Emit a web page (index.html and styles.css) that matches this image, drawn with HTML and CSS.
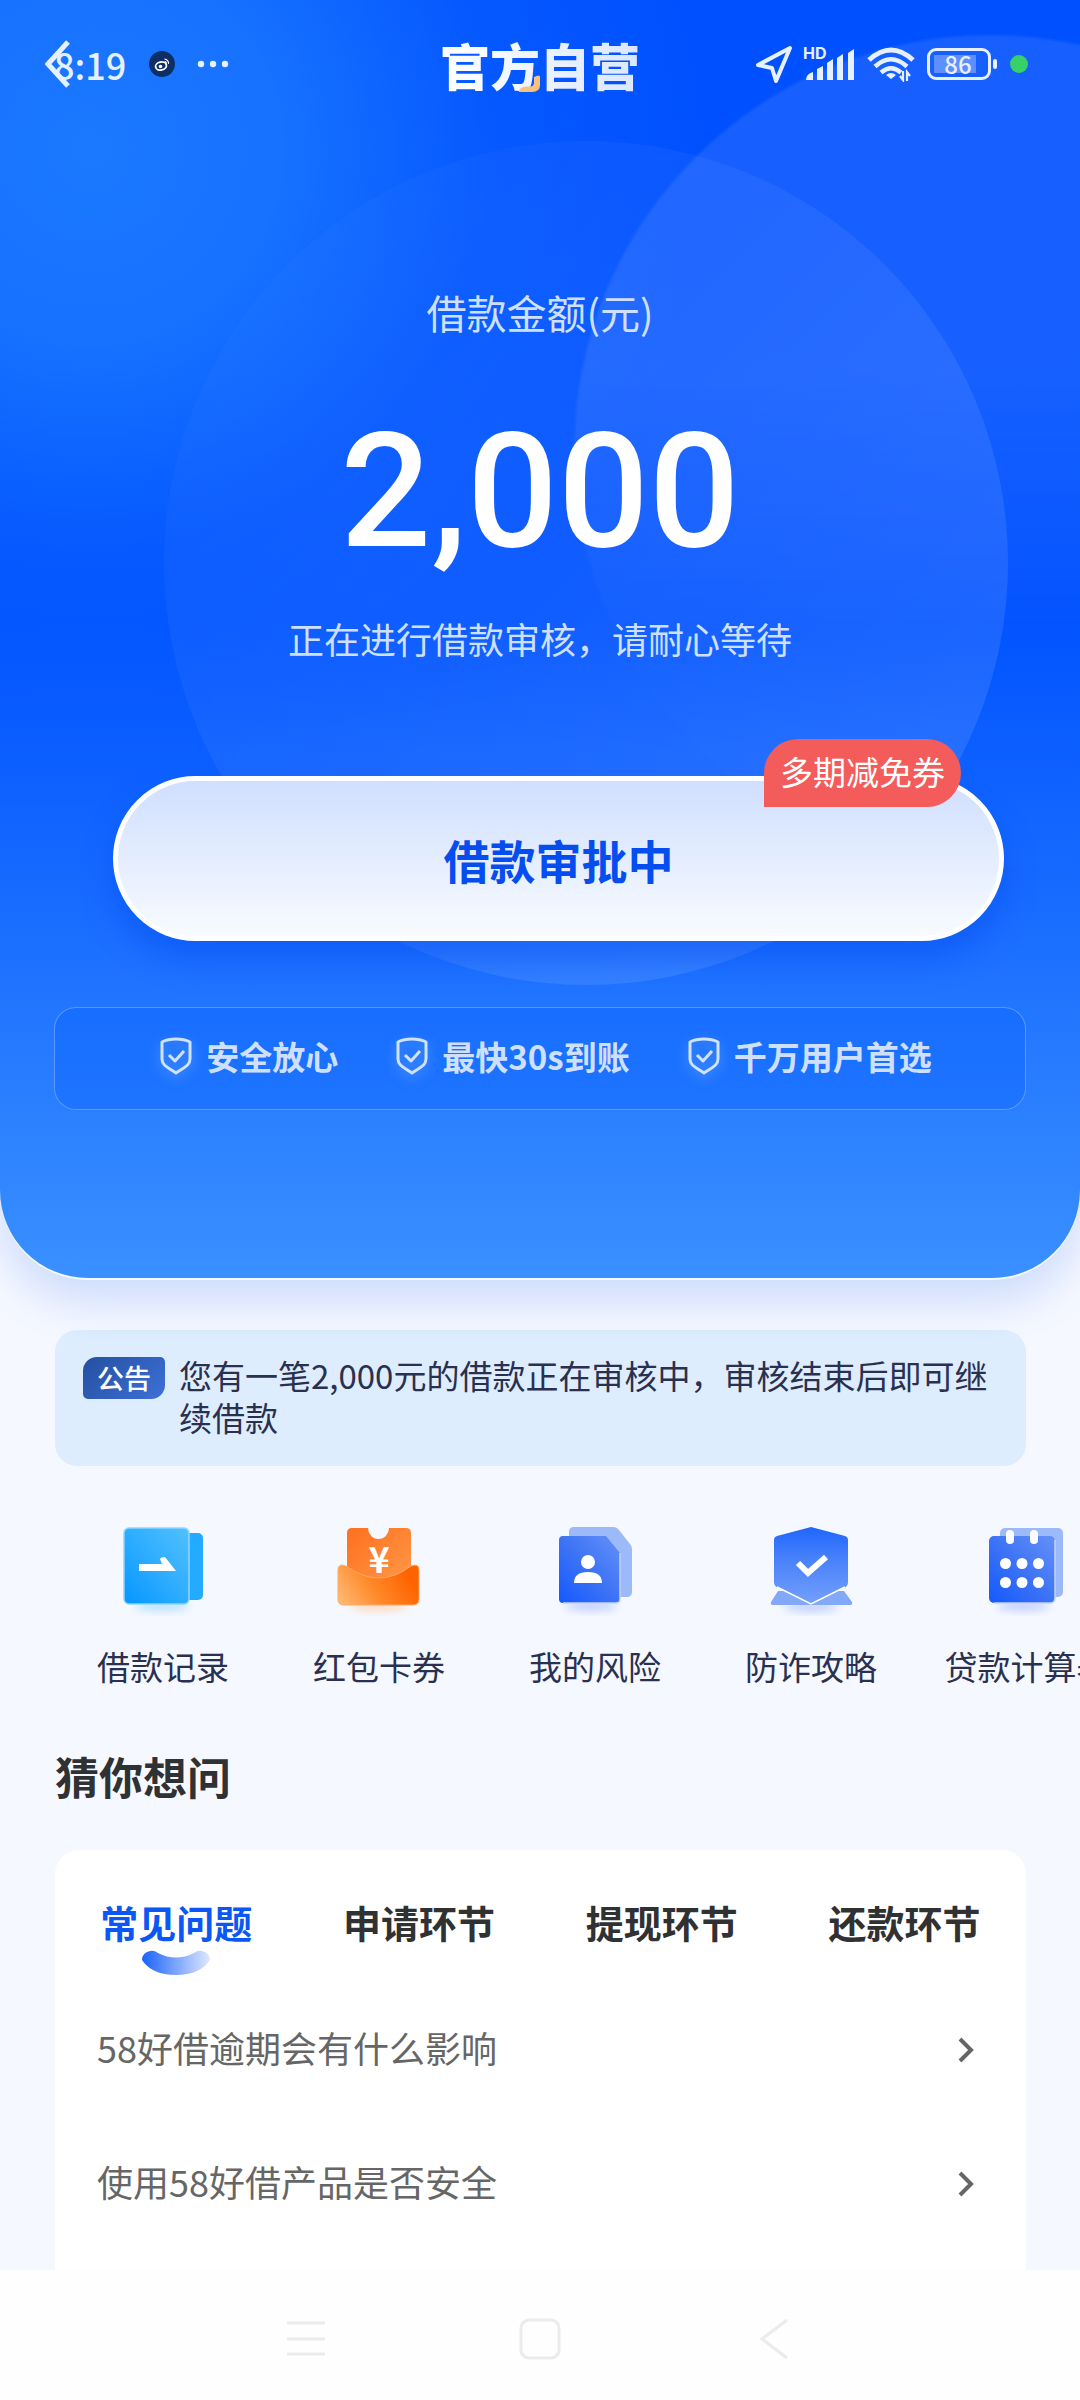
FILE: index.html
```html
<!DOCTYPE html>
<html lang="zh-CN">
<head>
<meta charset="utf-8">
<meta name="viewport" content="width=device-width, initial-scale=1">
<title>官方自营</title>
<link rel="stylesheet" href="styles.css">
</head>
<body>
<header class="hero">
  <div class="topbar">
    <div class="status status-left">
      <button class="back" type="button" aria-label="返回">
        <svg width="26" height="48" viewBox="0 0 26 48"><path d="M23 2 3 24l20 22" fill="none" stroke="#e6f0ff" stroke-width="5"/></svg>
      </button>
      <time class="clock">8:19</time>
      <svg class="weibo" width="26" height="26" viewBox="0 0 26 26"><circle cx="13" cy="13" r="13" fill="#0d2f66"/><ellipse cx="12" cy="15" rx="5.5" ry="4" fill="none" stroke="#fff" stroke-width="1.8" transform="rotate(-12 12 15)"/><circle cx="11.500" cy="15.500" r="1.800" fill="#fff"/><path d="M15.500 8.200a4 4 0 0 1 4 4.600M15.800 10.500a1.600 1.600 0 0 1 1.500 1.800" fill="none" stroke="#fff" stroke-width="1.200"/></svg>
      <svg class="more" width="32" height="8" viewBox="0 0 32 8" fill="#e6f0ff"><circle cx="4" cy="4" r="3.200"/><circle cx="16" cy="4" r="3.200"/><circle cx="28" cy="4" r="3.200"/></svg>
    </div>
    <h1 class="brand"><span class="brand-text">官方自营</span><svg class="brand-accent" width="22" height="18" viewBox="0 0 22 18"><path d="M16 2q6-3 6 0v8q0 7-8 7H1q0-5 7-5.500h4q4 0 4-4z" fill="#f9c27c"/></svg></h1>
    <div class="status status-right">
      <svg width="38" height="38" viewBox="0 0 38 38"><path d="M35 3 3 20l14 3 4 13z" fill="none" stroke="#e6f0ff" stroke-width="4" stroke-linejoin="round"/></svg>
      <div class="signal">
        <span class="hd">HD</span>
        <svg width="50" height="31" viewBox="0 0 50 31" fill="#e6f0ff"><path d="M1 31q0-6 7-8v8zM12 31V20l6-3v14zM22 31V14l6-4v21zM32 31V9l6-4v26zM43 31V4l6-4v31z"/></svg>
      </div>
      <svg width="48" height="36" viewBox="0 0 48 36" fill="none" stroke="#e6f0ff"><path d="M2 14Q24-6 46 14" stroke-width="5"/><path d="M8 20.500Q24 6 40 20.500" stroke-width="4.500"/><path d="M14 26.500q10-8.500 20 0" stroke-width="4.500"/><path d="m24 33-5-4q5-4 10 0z" fill="#e6f0ff" stroke="none"/><path d="M33 30l3 4v-9M43 30l-3-4v9" stroke-width="2.200"/></svg>
      <div class="battery"><span class="battery-level">86</span></div>
      <span class="rec-dot"></span>
    </div>
  </div>

  <p class="amount-label">借款金额(元)</p>
  <p class="amount">2,000</p>
  <p class="amount-note">正在进行借款审核，请耐心等待</p>

  <div class="cta">
    <button class="cta-button" type="button">借款审批中</button>
    <span class="cta-badge">多期减免券</span>
  </div>

  <ul class="perks">
    <li><svg class="shield" width="32" height="38" viewBox="0 0 32 38"><path d="M16 2c5 0 10 1 14 3v17c0 6-5 8-14 14C7 30 2 28 2 22V5c4-2 9-3 14-3z"/><path d="m9 18 6 6 9-10"/></svg>安全放心</li>
    <li><svg class="shield" width="32" height="38" viewBox="0 0 32 38"><path d="M16 2c5 0 10 1 14 3v17c0 6-5 8-14 14C7 30 2 28 2 22V5c4-2 9-3 14-3z"/><path d="m9 18 6 6 9-10"/></svg>最快30s到账</li>
    <li><svg class="shield" width="32" height="38" viewBox="0 0 32 38"><path d="M16 2c5 0 10 1 14 3v17c0 6-5 8-14 14C7 30 2 28 2 22V5c4-2 9-3 14-3z"/><path d="m9 18 6 6 9-10"/></svg>千万用户首选</li>
  </ul>
</header>

<main class="content">
  <section class="notice">
    <span class="notice-tag">公告</span>
    <p class="notice-text">您有一笔2,000元的借款正在审核中，审核结束后即可继续借款</p>
  </section>

  <nav class="shortcuts" aria-label="常用功能">
    <a class="shortcut" href="#records">
      <svg width="96" height="96" viewBox="0 0 96 96">
        <defs>
          <linearGradient id="rec" x1="1" y1="0" x2="0" y2="1"><stop offset="0" stop-color="#52c0ff"/><stop offset=".5" stop-color="#2eadff"/><stop offset="1" stop-color="#0596ff"/></linearGradient>
          <filter id="soft" x="-30%" y="-80%" width="160%" height="260%"><feGaussianBlur stdDeviation="4"/></filter>
        </defs>
        <ellipse cx="47" cy="86" rx="27" ry="5" fill="#b8e0ff" filter="url(#soft)"/>
        <rect x="60" y="13" width="28" height="67" rx="5" fill="#24aaff"/>
        <rect x="9" y="8" width="65" height="76" rx="5" fill="url(#rec)" stroke="#8ad8ff" stroke-width="1.500"/>
        <path d="M24 44h23l-2-5q1-2 5-2l11 14H24z" fill="#fff"/>
      </svg>
      <span>借款记录</span>
    </a>
    <a class="shortcut" href="#coupons">
      <svg width="96" height="96" viewBox="0 0 96 96">
        <defs>
          <linearGradient id="tic" x1="0" y1="0" x2="1" y2="1"><stop offset="0" stop-color="#ff701f"/><stop offset="1" stop-color="#ff9a4a"/></linearGradient>
          <linearGradient id="poc" x1="0" y1="1" x2="1" y2=".7"><stop offset="0" stop-color="#ffbd7a"/><stop offset=".5" stop-color="#ff8a2b"/><stop offset="1" stop-color="#ff6300"/></linearGradient>
        </defs>
        <ellipse cx="48" cy="86" rx="28" ry="5" fill="#ffd9bd" filter="url(#soft)"/>
        <path d="M21 8h16a10 10.500 0 0 0 21 0h17q5 0 5 5v55H16V13q0-5 5-5z" fill="url(#tic)"/>
        <path d="M7 50q0-7 8-4 33 24 65 0 8-3 8 4v29q0 6-6 6H13q-6 0-6-6z" fill="url(#poc)" stroke="#ffab66"/>
        <text x="48" y="53" class="yen">¥</text>
      </svg>
      <span>红包卡券</span>
    </a>
    <a class="shortcut" href="#risk">
      <svg width="96" height="96" viewBox="0 0 96 96">
        <defs><linearGradient id="doc" x1="1" y1="0" x2="0" y2="1"><stop offset="0" stop-color="#6591f7"/><stop offset=".5" stop-color="#3d73f5"/><stop offset="1" stop-color="#1459ff"/></linearGradient></defs>
        <ellipse cx="44" cy="86" rx="26" ry="5" fill="#c0cfff" filter="url(#soft)"/>
        <path d="M27 7h39q4 0 6 3l11 14q2 2 2 5v43q0 5-5 5H22V12q0-5 5-5z" fill="#9dbaf8"/>
        <path d="M16 16h43l14 17v46q0 4-4 4H16q-4 0-4-4V20q0-4 4-4z" fill="url(#doc)"/>
        <path d="M73 33v46q0 4-4 4H16" fill="none" stroke="#c2d4ff" stroke-width="1.500"/>
        <circle cx="41" cy="42" r="7" fill="#fff"/><path d="M27 63q0-11 14-11t14 11z" fill="#fff"/>
      </svg>
      <span>我的风险</span>
    </a>
    <a class="shortcut" href="#antifraud">
      <svg width="96" height="96" viewBox="0 0 96 96">
        <defs><linearGradient id="shd" x1="0" y1="0" x2="0" y2="1"><stop offset="0" stop-color="#1f66fb"/><stop offset=".4" stop-color="#4780fb"/><stop offset="1" stop-color="#75a0fb"/></linearGradient></defs>
        <ellipse cx="48" cy="87" rx="27" ry="5" fill="#c0cfff" filter="url(#soft)"/>
        <path d="M15 71h66l8 11q1 3-2 3H10q-3 0-2-3z" fill="#84a8f8"/>
        <path d="m48 7 34 9q3 1 3 4v42q0 4-4 6L48 84 15 68q-4-2-4-6V20q0-3 3-4z" fill="url(#shd)"/>
        <path d="m14 67 34 17 34-17" fill="none" stroke="#fff" stroke-width="1.500"/>
        <path d="m35 43 10 10 18-16" fill="none" stroke="#fff" stroke-width="6"/>
      </svg>
      <span>防诈攻略</span>
    </a>
    <a class="shortcut" href="#calculator">
      <svg width="96" height="96" viewBox="0 0 96 96">
        <ellipse cx="44" cy="86" rx="26" ry="5" fill="#c0cfff" filter="url(#soft)"/>
        <rect x="21" y="8" width="63" height="69" rx="5" fill="#9dbaf8"/>
        <rect x="10" y="16" width="66" height="67" rx="5" fill="url(#doc)"/>
        <path d="M76 20v58q0 5-5 5H15" fill="none" stroke="#c2d4ff" stroke-width="1.500"/>
        <g fill="#fff"><rect x="27" y="10" width="8" height="14" rx="4"/><rect x="51" y="10" width="8" height="14" rx="4"/><circle cx="26.500" cy="43.500" r="5.500"/><circle cx="43" cy="43.500" r="5.500"/><circle cx="59.500" cy="43.500" r="5.500"/><circle cx="26.500" cy="62.500" r="5.500"/><circle cx="43" cy="62.500" r="5.500"/><circle cx="59.500" cy="62.500" r="5.500"/></g>
      </svg>
      <span>贷款计算器</span>
    </a>
  </nav>

  <h2 class="section-title">猜你想问</h2>

  <section class="faq">
    <div class="tabs" role="tablist">
      <button class="tab tab-active" type="button" role="tab" aria-selected="true">常见问题<svg width="68" height="26" viewBox="0 0 68 26"><defs><linearGradient id="ind"><stop offset="0" stop-color="#1a62fb"/><stop offset="1" stop-color="#dfe8fd"/></linearGradient></defs><path d="M8 1q4-1 8 2 18 9 36 0 4-3 8-2 8 2 8 9-10 15-34 15T0 10Q0 3 8 1z" fill="url(#ind)"/></svg></button>
      <button class="tab" type="button" role="tab" aria-selected="false">申请环节</button>
      <button class="tab" type="button" role="tab" aria-selected="false">提现环节</button>
      <button class="tab" type="button" role="tab" aria-selected="false">还款环节</button>
    </div>
    <ul class="questions">
      <li><a href="#q1">58好借逾期会有什么影响<svg width="18" height="34" viewBox="0 0 18 34"><path d="m3 9 11 11L3 31"/></svg></a></li>
      <li><a href="#q2">使用58好借产品是否安全<svg width="18" height="34" viewBox="0 0 18 34"><path d="m3 9 11 11L3 31"/></svg></a></li>
    </ul>
  </section>
</main>

<footer class="sysnav">
  <button type="button" aria-label="最近任务"><svg width="42" height="42" viewBox="0 0 42 42"><path d="M2 5h38M2 21h38M2 36h38"/></svg></button>
  <button type="button" aria-label="主屏幕"><svg width="42" height="42" viewBox="0 0 42 42"><rect x="2" y="2" width="38" height="38" rx="8"/></svg></button>
  <button type="button" aria-label="返回"><svg width="42" height="42" viewBox="0 0 42 42"><path d="M34 2 9 21l25 19"/></svg></button>
</footer>
</body>
</html>
```
FILE: styles.css
```css
* { box-sizing: border-box; }

body {
  margin: 0;
  min-height: 100vh;
  display: flex;
  flex-direction: column;
  overflow-x: hidden;
  background: #f5f8ff;
  color: #2a3050;
  font-family: "Noto Sans CJK SC", "Noto Sans", sans-serif;
}

h1, h2, p, ul { margin: 0; padding: 0; font-weight: inherit; }
ul { list-style: none; }
a { color: inherit; text-decoration: none; }
button { margin: 0; padding: 0; border: 0; background: none; font: inherit; color: inherit; cursor: pointer; }
svg { display: block; flex: none; }

/* Hero */
.hero {
  position: relative;
  isolation: isolate;
  padding-bottom: 168px;
  border-radius: 0 0 88px 88px;
  text-align: center;
  color: #cfe0ff;
  background:
    radial-gradient(circle 620px at 90px 150px, #1b78ff 0, rgba(27,120,255,.85) 30%, rgba(14,100,255,.4) 65%, rgba(0,80,255,0) 100%),
    linear-gradient(#0050ff 0, #0052ff 620px, #1c70ff 950px, #3a90ff 100%);
  box-shadow: 0 2px 0 #f2faff, 0 24px 44px rgba(50,110,240,.2);
}
.hero::before,
.hero::after {
  content: "";
  position: absolute;
  z-index: -1;
}
.hero::before {
  left: calc(50% - 376px);
  top: 141px;
  width: 844px;
  height: 844px;
  border-radius: 50%;
  background: linear-gradient(135deg, rgba(255,255,255,.01) 10%, rgba(255,255,255,.06) 45%, rgba(255,255,255,.1) 80%);
}
.hero::after {
  left: calc(50% + 32px);
  right: 0;
  top: 32px;
  height: 838px;
  background: radial-gradient(circle 418px at 418px 419px, rgba(255,255,255,.09) 0 99%, transparent 100%);
  -webkit-mask-image: linear-gradient(#000 40%, rgba(0,0,0,.1) 72%);
  mask-image: linear-gradient(#000 40%, rgba(0,0,0,.1) 72%);
}

.topbar {
  display: grid;
  grid-template-columns: 1fr auto 1fr;
  align-items: center;
  height: 128px;
  color: #e6f0ff;
}
.status { display: flex; align-items: center; }
.status-left { position: relative; padding-left: 54px; }
.back { position: absolute; left: 45px; top: 4px; }
.clock { font-size: 36px; line-height: 56px; font-weight: 500; }
.weibo { margin-left: 23px; }
.more { margin-left: 22px; }

.brand { position: relative; font-size: 50px; line-height: 64px; font-weight: 900; }
.brand-text {
  background: linear-gradient(90deg, #fff, #dbe7ff);
  -webkit-background-clip: text;
  background-clip: text;
  color: transparent;
}
.brand-accent { position: absolute; left: 78px; top: 43px; }

.status-right { justify-content: flex-end; padding-right: 52px; gap: 12px; }
.signal { position: relative; }
.hd { position: absolute; left: -2px; top: -4px; font: 700 16px/16px "Inter", sans-serif; }
.battery {
  position: relative;
  width: 64px;
  height: 32px;
  padding: 4px;
  border: 3px solid #e6f0ff;
  border-radius: 9px;
  margin-right: 7px;
}
.battery::after {
  content: "";
  position: absolute;
  right: -9px;
  top: 8px;
  width: 4px;
  height: 10px;
  border-radius: 2px;
  background: #e6f0ff;
}
.battery-level {
  display: block;
  width: 42px;
  padding-left: 6px;
  background: rgba(255,255,255,.3);
  font-size: 24px;
  line-height: 18px;
  font-weight: 500;
}
.rec-dot { width: 18px; height: 18px; border-radius: 50%; background: #38d167; }

.amount-label { margin-top: 154px; font-size: 40px; line-height: 60px; }
.amount {
  margin-top: 70px;
  font-family: Roboto, "Noto Sans CJK SC", sans-serif;
  font-size: 160px;
  line-height: 160px;
  font-weight: 500;
  color: #fff;
}
.amount-note { margin-top: 42px; font-size: 36px; line-height: 48px; }

.cta { position: relative; margin: 114px 76px 0 113px; }
.cta-button {
  display: block;
  width: 100%;
  height: 165px;
  border: 5px solid #fff;
  border-radius: 84px;
  background: linear-gradient(#d0dfff, #f8fbff);
  box-shadow: 0 18px 32px rgba(0,72,240,.45);
  color: #064df0;
  font-size: 46px;
  line-height: 64px;
  font-weight: 700;
}
.cta-badge {
  position: absolute;
  right: 43px;
  top: -37px;
  height: 68px;
  padding: 0 16px;
  border-radius: 34px 34px 34px 0;
  background: #f45b5b;
  color: #fff;
  font-size: 33px;
  line-height: 64px;
}

.perks {
  display: flex;
  justify-content: center;
  align-items: center;
  gap: 58px;
  height: 103px;
  margin: 66px 54px 0;
  padding: 0 0 6px 12px;
  border: 1px solid rgba(255,255,255,.28);
  border-radius: 22px;
  background: rgba(0,88,255,.28);
  font-size: 33px;
  line-height: 48px;
  font-weight: 700;
}
.perks li { display: flex; align-items: center; gap: 14px; }
.shield {
  fill: none;
  stroke: #cfe2ff;
  stroke-width: 3;
  stroke-linejoin: round;
  filter: drop-shadow(0 4px 6px rgba(160,205,255,.5));
}

/* Content */
.content { flex: 1; display: flex; flex-direction: column; padding: 52px 54px 0 55px; }

.notice {
  display: flex;
  align-items: flex-start;
  gap: 14px;
  padding: 24px 28px 28px;
  border-radius: 22px;
  background: #deedfe;
  font-size: 33px;
  line-height: 42px;
}
.notice-tag {
  flex: none;
  margin-top: 3px;
  width: 82px;
  border-radius: 14px 5px 14px 5px;
  background: linear-gradient(135deg, #24509f, #3d70d8);
  color: #fff;
  font-size: 27px;
  font-weight: 500;
  text-align: center;
}

.shortcuts { display: flex; margin: 54px -54px 0 0; overflow-x: auto; scrollbar-width: none; }
.shortcut {
  flex: 0 0 216px;
  display: flex;
  flex-direction: column;
  align-items: center;
  gap: 26px;
  font-size: 33px;
  line-height: 48px;
}
.yen { fill: #fff; font-size: 36px; font-weight: 700; text-anchor: middle; }

.section-title { margin-top: 56px; font-size: 44px; line-height: 60px; font-weight: 700; color: #303133; }

.faq {
  flex: 1;
  margin-top: 44px;
  padding: 44px 0 22px;
  border-radius: 24px 24px 0 0;
  background: #fff;
}
.tabs { display: grid; grid-template-columns: repeat(4, 1fr); align-items: start; height: 86px; }
.tab {
  display: flex;
  flex-direction: column;
  align-items: center;
  font-size: 38px;
  line-height: 56px;
  font-weight: 700;
  color: #303133;
}
.tab-active { color: #0a57f5; }

.questions a {
  display: flex;
  align-items: center;
  justify-content: space-between;
  height: 134px;
  padding: 0 51px 0 42px;
  font-size: 36px;
  line-height: 54px;
  color: #666;
}
.questions svg { fill: none; stroke: #666; stroke-width: 4; }

/* System navigation */
.sysnav {
  display: flex;
  justify-content: center;
  align-items: center;
  gap: 192px;
  height: 130px;
  padding-top: 8px;
  background: #fefefe;
}
.sysnav svg { fill: none; stroke: #ebebeb; stroke-width: 3; }
```
